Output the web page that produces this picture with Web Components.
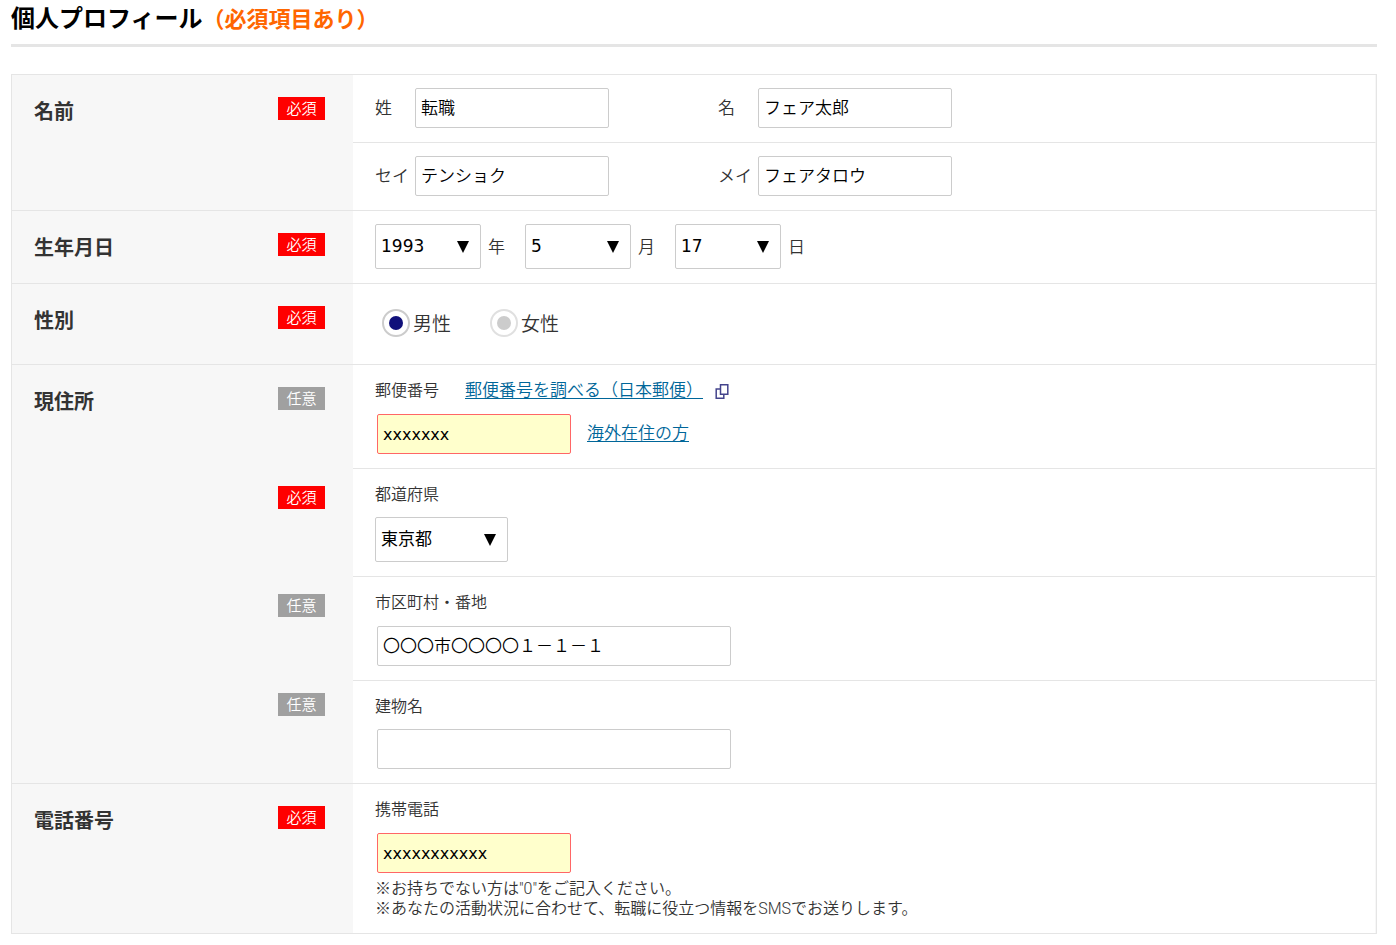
<!DOCTYPE html>
<html lang="ja">
<head>
<meta charset="utf-8">
<meta name="viewport" content="width=device-width, initial-scale=1">
<title>個人プロフィール</title>
<style>
body {
  margin: 0;
  background: #fff;
  color: #333;
  font: 350 17px/24px "Noto Sans CJK JP", sans-serif;
  --line: #e5e5e5;
  --link: #006699;
}
</style>
</head>
<body>
<profile-page></profile-page>

<script>
const reset = `<style>*, *::before { box-sizing: border-box; }</style>`;

function define(name, html, setup) {
  const template = document.createElement('template');
  template.innerHTML = reset + html;
  customElements.define(name, class extends HTMLElement {
    constructor() {
      super();
      this.attachShadow({ mode: 'open' }).append(template.content.cloneNode(true));
    }
    connectedCallback() {
      if (setup) setup.call(this, this.shadowRoot);
    }
  });
}

define('section-title', `
  <style>
    :host { display: block; border-bottom: 3px solid var(--line); }
    h1 { margin: 0; padding-bottom: 10px; font-size: 24px; line-height: 34px; font-weight: 700; color: #000; }
    ::slotted([slot=note]) { font-size: 22px; color: #ff6600; }
  </style>
  <h1><slot></slot><slot name="note"></slot></h1>`);

define('status-badge', `
  <style>
    :host { display: block; width: 47px; padding-bottom: 2px; background: #a0a0a0; color: #fff; font-size: 15px; line-height: 21px; text-align: center; }
    :host([required]) { background: #f00; }
  </style>
  <slot></slot>`);

/* A titled group of lines; its rule spans both columns. */
define('profile-row', `
  <style>
    :host { display: block; border-bottom: 1px solid var(--line); }
    :host(:last-of-type) { border-bottom: 0; }
  </style>
  <div role="group"><slot></slot></div>`, function (root) {
    root.querySelector('div').setAttribute('aria-label', this.getAttribute('name'));
  });

/* One line: heading and badge on the left, controls on the right. */
define('profile-line', `
  <style>
    :host { display: grid; grid-template-columns: 341px minmax(0, 1fr); }
    .head { display: flex; justify-content: space-between; align-items: flex-start; padding: 22px 28px 0 22px; background: #f7f7f7; }
    :host([sub]) .head { padding-top: 17px; }
    :host([sub=tight]) .head { padding-top: 12px; }
    ::slotted(h2) { margin: 0; font-size: 20px; line-height: 28px; font-weight: 700; }
    ::slotted(status-badge) { margin-left: auto; }
    .body { padding: 13px 22px 14px; border-bottom: 1px solid var(--line); border-right: 1px solid #f7f7f7; }
    :host(:last-of-type) .body { border-bottom: 0; }
  </style>
  <div class="head"><slot name="title"></slot><slot name="badge"></slot></div>
  <div class="body"><slot></slot></div>`);

define('field-set', `
  <style>
    :host { display: flex; flex-wrap: wrap; gap: 0 109px; }
    :host([kind=date]) { gap: 0 20px; }
  </style>
  <slot></slot>`);

define('text-field', `
  <style>
    :host { display: block; }
    .wrap { display: grid; grid-template-columns: 40px 194px; align-items: center; }
    :host([stacked]) .wrap { display: block; }
    .caption { display: flex; align-items: center; padding-bottom: 2px; line-height: 22px; }
    :host([stacked]) .caption { margin-bottom: 12px; }
    :host([compact]) .caption { margin-bottom: 11px; }
    :host([stacked]) label { font-size: 16px; }
    .entry { display: flex; align-items: center; gap: 16px; }
    :host([stacked]) .entry { padding-left: 2px; }
    ::slotted([slot=after]) { padding-bottom: 4px; }
    input { width: 194px; height: 40px; margin: 0; padding: 0 5px 4px; border: 1px solid #ccc; border-radius: 2px; background: #fff; color: #000; font: inherit; outline: 0; }
    :host([wide]) input { width: 354px; }
    :host([error]) input { border-color: #ff6666; background: #ffffcc; padding-bottom: 0; font: 16px "DejaVu Sans", "Noto Sans CJK JP", sans-serif; }
  </style>
  <div class="wrap">
    <div class="caption"><label for="i"></label><slot name="beside"></slot></div>
    <div class="entry"><input id="i" type="text"><slot name="after"></slot></div>
  </div>
  <slot></slot>`, function (root) {
    root.querySelector('label').textContent = this.getAttribute('label');
    root.querySelector('input').value = this.getAttribute('value') || '';
  });

define('select-field', `
  <style>
    :host { display: block; --w: 106px; }
    :host([stacked]) { --w: 133px; }
    .wrap { display: flex; align-items: center; gap: 7px; }
    :host([stacked]) .wrap { flex-direction: column; align-items: flex-start; gap: 11px; }
    label { padding-bottom: 2px; line-height: 22px; }
    :host([stacked]) label { order: -1; font-size: 16px; }
    .box { display: grid; width: var(--w); align-items: center; }
    select, svg { grid-area: 1 / 1; }
    select { appearance: none; width: 100%; height: 45px; margin: 0; padding: 0 28px 2px 5px; border: 1px solid #ccc; border-radius: 2px; background: #fff; color: #000; font: 17px "DejaVu Sans", "Noto Sans CJK JP", sans-serif; outline: 0; }
    svg { justify-self: end; margin-right: 12px; pointer-events: none; }
  </style>
  <div class="wrap">
    <div class="box">
      <select id="s"><option></option></select>
      <svg width="12" height="12" viewBox="0 0 12 12" aria-hidden="true"><path d="M0 0H12L6 12Z" fill="#000"/></svg>
    </div>
    <label for="s"></label>
  </div>`, function (root) {
    root.querySelector('label').textContent = this.getAttribute('label');
    root.querySelector('option').textContent = this.getAttribute('value');
  });

define('radio-group', `
  <style>
    :host { display: flex; gap: 39px; padding: 12px 0 13px 7px; }
    label { display: flex; align-items: center; gap: 3px; font-size: 19px; line-height: 28px; }
    input { appearance: none; display: grid; place-items: center; width: 28px; height: 28px; margin: 0; border: 2px solid #e0e0e0; border-radius: 50%; background: #fff; }
    input::before { content: ""; width: 14px; height: 14px; border-radius: 50%; background: #ccc; }
    input:checked { border-color: #ccc; }
    input:checked::before { background: #10107a; }
  </style>
  <label><input type="radio" name="gender" checked>男性</label>
  <label><input type="radio" name="gender">女性</label>`);

define('text-link', `
  <style>
    :host { display: inline-flex; align-items: center; gap: 12px; }
    a { color: var(--link); text-decoration: underline; text-underline-offset: 2px; }
    svg { display: none; margin-top: 4px; }
    :host([external]) svg { display: block; }
  </style>
  <a href="#"><slot></slot></a>
  <svg width="14" height="16" viewBox="0 0 14 16" fill="none" stroke="#44448c" stroke-width="1.5" aria-hidden="true">
    <path d="M5.5 1.8H12.8V11.2H5.5Z"/><path d="M5.5 6H1.2V15.2H8.8V11.2"/>
  </svg>`);

define('field-note', `
  <style>
    :host { display: block; padding-top: 6px; font-family: Roboto, "Noto Sans CJK JP", sans-serif; font-size: 16px; line-height: 20px; }
    p { margin: 0; }
  </style>
  <p><slot></slot></p>`);

define('profile-page', `
  <style>
    :host { display: block; padding: 0 19px 11px 11px; }
    form { margin-top: 27px; border: 1px solid var(--line); }
    text-link[slot=beside] { margin-left: 26px; }
  </style>
  <section-title>個人プロフィール<span slot="note">（必須項目あり）</span></section-title>
  <form>
    <profile-row name="名前">
      <profile-line>
        <h2 slot="title">名前</h2><status-badge slot="badge" required>必須</status-badge>
        <field-set><text-field label="姓" value="転職"></text-field><text-field label="名" value="フェア太郎"></text-field></field-set>
      </profile-line>
      <profile-line>
        <field-set><text-field label="セイ" value="テンショク"></text-field><text-field label="メイ" value="フェアタロウ"></text-field></field-set>
      </profile-line>
    </profile-row>
    <profile-row name="生年月日">
      <profile-line>
        <h2 slot="title">生年月日</h2><status-badge slot="badge" required>必須</status-badge>
        <field-set kind="date">
          <select-field label="年" value="1993"></select-field>
          <select-field label="月" value="5"></select-field>
          <select-field label="日" value="17"></select-field>
        </field-set>
      </profile-line>
    </profile-row>
    <profile-row name="性別">
      <profile-line>
        <h2 slot="title">性別</h2><status-badge slot="badge" required>必須</status-badge>
        <radio-group></radio-group>
      </profile-line>
    </profile-row>
    <profile-row name="現住所">
      <profile-line>
        <h2 slot="title">現住所</h2><status-badge slot="badge">任意</status-badge>
        <text-field stacked error label="郵便番号" value="xxxxxxx">
          <text-link slot="beside" external>郵便番号を調べる（日本郵便）</text-link>
          <text-link slot="after">海外在住の方</text-link>
        </text-field>
      </profile-line>
      <profile-line sub>
        <status-badge slot="badge" required>必須</status-badge>
        <select-field stacked label="都道府県" value="東京都"></select-field>
      </profile-line>
      <profile-line sub>
        <status-badge slot="badge">任意</status-badge>
        <text-field stacked wide label="市区町村・番地" value="〇〇〇市〇〇〇〇１－１－１"></text-field>
      </profile-line>
      <profile-line sub="tight">
        <status-badge slot="badge">任意</status-badge>
        <text-field stacked wide compact label="建物名"></text-field>
      </profile-line>
    </profile-row>
    <profile-row name="電話番号">
      <profile-line>
        <h2 slot="title">電話番号</h2><status-badge slot="badge" required>必須</status-badge>
        <text-field stacked error label="携帯電話" value="xxxxxxxxxxx">
          <field-note>※お持ちでない方は"0"をご記入ください。<br>※あなたの活動状況に合わせて、転職に役立つ情報をSMSでお送りします。</field-note>
        </text-field>
      </profile-line>
    </profile-row>
  </form>`);
</script>
</body>
</html>
